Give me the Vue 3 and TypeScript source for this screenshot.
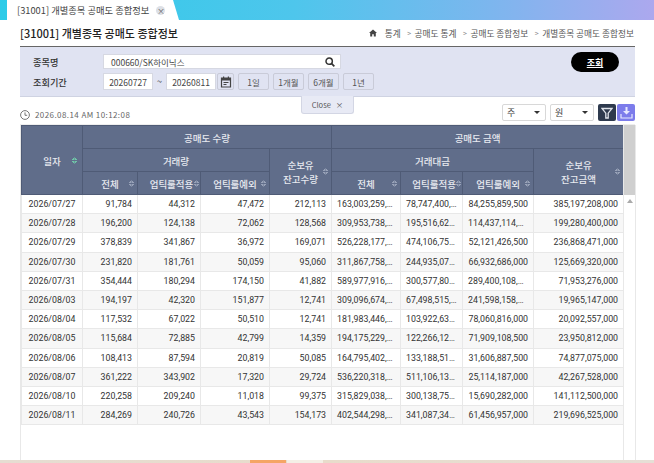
<script setup lang="ts">
interface Row {
  date: string
  qty: string[]
  amt: string[]
}

const rows: Row[] = [
  { date: '2026/07/27', qty: ['91,784', '44,312', '47,472', '212,113'], amt: ['163,003,259,000', '78,747,400,000', '84,255,859,500', '385,197,208,000'] },
  { date: '2026/07/28', qty: ['196,200', '124,138', '72,062', '128,568'], amt: ['309,953,738,000', '195,516,624,000', '114,437,114,000', '199,280,400,000'] },
  { date: '2026/07/29', qty: ['378,839', '341,867', '36,972', '169,071'], amt: ['526,228,177,000', '474,106,754,000', '52,121,426,500', '236,868,471,000'] },
  { date: '2026/07/30', qty: ['231,820', '181,761', '50,059', '95,060'], amt: ['311,867,758,000', '244,935,070,000', '66,932,686,000', '125,669,320,000'] },
  { date: '2026/07/31', qty: ['354,444', '180,294', '174,150', '41,882'], amt: ['589,977,916,000', '300,577,800,000', '289,400,108,000', '71,953,276,000'] },
  { date: '2026/08/03', qty: ['194,197', '42,320', '151,877', '12,741'], amt: ['309,096,674,000', '67,498,515,000', '241,598,158,000', '19,965,147,000'] },
  { date: '2026/08/04', qty: ['117,532', '67,022', '50,510', '12,741'], amt: ['181,983,446,000', '103,922,630,000', '78,060,816,000', '20,092,557,000'] },
  { date: '2026/08/05', qty: ['115,684', '72,885', '42,799', '14,359'], amt: ['194,175,229,000', '122,266,120,000', '71,909,108,500', '23,950,812,000'] },
  { date: '2026/08/06', qty: ['108,413', '87,594', '20,819', '50,085'], amt: ['164,795,402,000', '133,188,510,000', '31,606,887,500', '74,877,075,000'] },
  { date: '2026/08/07', qty: ['361,222', '343,902', '17,320', '29,724'], amt: ['536,220,318,000', '511,106,130,000', '25,114,187,000', '42,267,528,000'] },
  { date: '2026/08/10', qty: ['220,258', '209,240', '11,018', '99,375'], amt: ['315,829,038,000', '300,138,755,000', '15,690,282,000', '141,112,500,000'] },
  { date: '2026/08/11', qty: ['284,269', '240,726', '43,543', '154,173'], amt: ['402,544,298,000', '341,087,340,000', '61,456,957,000', '219,696,525,000'] },
]

const crumbs = ['통계', '공매도 통계', '공매도 종합정보', '개별종목 공매도 종합정보']
const periods = ['1일', '1개월', '6개월', '1년']
</script>

<template>
  <div class="page">
    <div class="tabbar">
      <div class="tab">
        <span>[31001] 개별종목 공매도 종합정보</span>
        <span class="tab-x">×</span>
      </div>
    </div>

    <div class="main">
      <div class="head">
        <h1>[31001] 개별종목 공매도 종합정보</h1>
        <div class="crumbs">
          <svg width="8" height="8" viewBox="0 0 10 10"><path d="M5 .5 0 5h1.500v4.500h2.500V6.500h2v3h2.500V5H10z" fill="#444" /></svg>
          <template v-for="(c, i) in crumbs" :key="c">
            <span v-if="i" class="sep">&gt;</span>
            <span>{{ c }}</span>
          </template>
        </div>
      </div>

      <div class="search">
        <div class="fields">
          <div class="field first">
            <label>종목명</label>
            <div class="input stock">
              <span>000660/SK하이닉스</span>
              <svg width="10" height="10" viewBox="0 0 12 12"><circle cx="5" cy="5" r="3.800" fill="none" stroke="#333" stroke-width="1.800" /><path d="m8 8 3.200 3.200" stroke="#333" stroke-width="2" /></svg>
            </div>
          </div>
          <div class="field">
            <label>조회기간</label>
            <div class="input date">20260727</div>
            <span class="tilde">~</span>
            <div class="input date">20260811</div>
            <button class="cal">
              <svg width="12" height="12" viewBox="0 0 12 12"><path d="M1.500 2h9v9h-9z" fill="none" stroke="#444" stroke-width="1.200" /><path d="M1.500 2h9v2.500h-9zM3 .5h1.200V2H3zM7.800 .5H9V2H7.800z" fill="#444" /><path d="M3.500 6h5v1h-5zM3.500 8h3v1h-3z" fill="#444" /></svg>
            </button>
            <button v-for="p in periods" :key="p" class="period">{{ p }}</button>
          </div>
        </div>
        <button class="go">조회</button>
      </div>

      <div class="info">
        <div class="stamp">
          <svg width="10" height="10" viewBox="0 0 10 10"><circle cx="5" cy="5" r="4.400" fill="none" stroke="#666" stroke-width=".9" /><path d="M5 2.400V5.300h2.200" fill="none" stroke="#666" stroke-width=".9" /></svg>
          <span>2026.08.14 AM 10:12:08</span>
        </div>
        <div class="close-tab">Close <span>×</span></div>
        <div class="tools">
          <div class="select"><span>주</span><i /></div>
          <div class="select"><span>원</span><i /></div>
          <button class="ico filter">
            <svg width="12" height="12" viewBox="0 0 12 12"><path d="M1 1.500h10L7.200 6.200V11H4.800V6.200z" fill="none" stroke="#dfe3ea" stroke-width="1.300" /></svg>
          </button>
          <button class="ico down">
            <svg width="13" height="13" viewBox="0 0 13 13"><path d="M5.500 1h2v4H10L6.500 8.500 3 5h2.500z" fill="#e6e8ff" /><path d="M1 8v4h11V8" fill="none" stroke="#e6e8ff" stroke-width="1.200" /></svg>
          </button>
        </div>
      </div>

      <div class="grid-wrap">
        <div class="grid-scroll">
          <table>
            <colgroup>
              <col class="c-date" />
              <col class="c1" />
              <col class="c2" />
              <col class="c3" />
              <col class="c4" />
              <col class="c5" />
              <col class="c6" />
              <col class="c7" />
              <col class="c8" />
            </colgroup>
            <thead>
              <tr>
                <th rowspan="3">일자<i class="sort on" /></th>
                <th colspan="4">공매도 수량</th>
                <th colspan="4">공매도 금액</th>
              </tr>
              <tr>
                <th colspan="3">거래량</th>
                <th rowspan="2">순보유<br />잔고수량<i class="sort" /></th>
                <th colspan="3">거래대금</th>
                <th rowspan="2">순보유<br />잔고금액<i class="sort" /></th>
              </tr>
              <tr>
                <th>전체<i class="sort" /></th>
                <th class="tight">업틱룰적용<i class="sort" /></th>
                <th>업틱룰예외<i class="sort" /></th>
                <th>전체<i class="sort" /></th>
                <th class="tight">업틱룰적용<i class="sort" /></th>
                <th>업틱룰예외<i class="sort" /></th>
              </tr>
            </thead>
            <tbody>
              <tr v-for="r in rows" :key="r.date">
                <td class="d">{{ r.date }}</td>
                <td v-for="(q, i) in r.qty" :key="i">{{ q }}</td>
                <td v-for="(a, i) in r.amt" :key="'a' + i">{{ a }}</td>
              </tr>
            </tbody>
          </table>
        </div>
        <div class="scrollbar">
          <div class="sb-top" />
          <div class="sb-arrow" />
        </div>
      </div>
    </div>

    <div class="taskbar"><span class="orange" /><span class="pale" /></div>
  </div>
</template>

<style>
html, body {
  margin: 0;
  background: #fff;
  overflow: hidden;
}
</style>

<style scoped>
.page {
  width: 654px;
  height: 463px;
  display: flex;
  flex-direction: column;
  overflow: hidden;
  font-family: "Noto Sans CJK KR", "Noto Sans", sans-serif;
  color: #333;
}

.tabbar {
  height: 20px;
  flex: none;
  padding-left: 7px;
  background: linear-gradient(90deg, #2ccbe8 0%, #4ec6ec 45%, #7cb6ee 75%, #aca8ee 100%);
}

.tab {
  width: 179px;
  height: 20px;
  box-sizing: border-box;
  padding: 0 0 0 10px;
  display: flex;
  align-items: center;
  gap: 7px;
  font-size: 9.300px;
  color: #444;
  background: #fff;
  clip-path: polygon(0 0, 166px 0, 172px 100%, 0 100%);
}

.tab-x {
  width: 9px;
  height: 9px;
  border-radius: 50%;
  background: #dde0e6;
  color: #666;
  font-size: 8px;
  line-height: 9px;
  text-align: center;
}

.main {
  flex: 1;
  min-height: 0;
  display: flex;
  flex-direction: column;
  padding: 0 19px 0 20px;
}

.head {
  height: 26px;
  flex: none;
  display: flex;
  align-items: center;
  justify-content: space-between;
}

h1 {
  margin: 0;
  font-size: 11px;
  font-weight: 500;
  color: #222;
}

.crumbs {
  display: flex;
  align-items: center;
  gap: 3.500px;
  padding-right: 1px;
  font-size: 8.700px;
  color: #555;
}

.crumbs svg {
  margin-right: 4px;
}

.sep {
  color: #888;
  font-size: 7px;
  margin-left: 3px;
}

.search {
  height: 51px;
  flex: none;
  box-sizing: border-box;
  border-top: 1px solid #666;
  border-bottom: 1px solid #cfd3e2;
  background: #e0e3f2;
  display: flex;
  justify-content: space-between;
  padding: 5px 16px 0 13px;
}

.fields {
  display: flex;
  flex-direction: column;
  gap: 4px;
  padding-top: 2px;
}

.field {
  display: flex;
  align-items: center;
  height: 17px;
}

.field.first {
  height: 15px;
}

.field label {
  width: 70px;
  font-size: 9.200px;
  font-weight: 500;
  color: #333;
}

.input {
  height: 100%;
  box-sizing: border-box;
  background: #fff;
  border: 1px solid #d6d8e2;
  font-size: 8.500px;
  color: #444;
  display: flex;
  align-items: center;
}

.stock {
  width: 238px;
  padding: 0 5px 0 7px;
  justify-content: space-between;
}

.date {
  width: 50px;
  justify-content: center;
}

.tilde {
  width: 13px;
  text-align: center;
  font-size: 9px;
}

button {
  padding: 0;
  font-family: inherit;
  cursor: pointer;
}

.cal {
  width: 17px;
  height: 17px;
  margin: 0 4px 0 1px;
  background: #e0e3f2;
  border: 1px solid #c9cbd8;
  border-radius: 2px;
  display: flex;
  align-items: center;
  justify-content: center;
}

.period {
  height: 17px;
  width: 31px;
  margin-right: 4px;
  background: #e0e3f2;
  border: 1px solid #c9cbd8;
  border-radius: 2px;
  font-size: 8.500px;
  color: #555;
}

.go {
  width: 48px;
  height: 20px;
  margin-top: 0;
  border: 0;
  border-radius: 10px;
  background: #000;
  color: #fff;
  font-size: 9px;
  font-weight: 700;
  text-decoration: underline;
}

.info {
  position: relative;
  height: 27px;
  flex: none;
  display: flex;
  justify-content: space-between;
  align-items: center;
}

.stamp {
  display: flex;
  align-items: center;
  gap: 5px;
  font-size: 8px;
  color: #666;
  letter-spacing: .42px;
  padding-top: 8px;
}

.close-tab {
  position: absolute;
  left: 281px;
  top: -1px;
  width: 53px;
  height: 18px;
  box-sizing: border-box;
  background: #e8eaf5;
  border: 1px solid #d3d6e4;
  border-top: 0;
  border-radius: 0 0 3px 3px;
  font-size: 7.500px;
  color: #555;
  display: flex;
  align-items: center;
  justify-content: center;
  gap: 5px;
}

.tools {
  display: flex;
  align-items: center;
  gap: 1px;
  padding-top: 4px;
}

.select {
  width: 44px;
  height: 17px;
  box-sizing: border-box;
  margin-right: 3px;
  border: 1px solid #d8d8d8;
  border-radius: 2px;
  display: flex;
  align-items: center;
  justify-content: space-between;
  padding: 0 5px 0 4px;
  font-size: 9px;
  color: #444;
}

.select i {
  border-top: 3.500px solid #333;
  border-left: 3px solid transparent;
  border-right: 3px solid transparent;
}

.ico {
  width: 18px;
  height: 17px;
  border: 0;
  border-radius: 2px;
  display: flex;
  align-items: center;
  justify-content: center;
}

.filter {
  background: #2e3a4e;
}

.down {
  background: #7c7ceb;
}

.grid-wrap {
  flex: 1;
  min-height: 0;
  display: flex;
  border-left: 1px solid #e8e8e8;
  border-top: 1px solid #eee;
}

.grid-scroll {
  width: 602px;
  flex: none;
  overflow: hidden;
}

table {
  width: 602px;
  table-layout: fixed;
  border-collapse: collapse;
}

.c-date { width: 61px; }
.c1 { width: 55px; }
.c2 { width: 63px; }
.c3 { width: 69px; }
.c4 { width: 62px; }
.c5 { width: 69px; }
.c6 { width: 62px; }
.c7 { width: 71px; }
.c8 { width: 90px; }

th {
  position: relative;
  height: 23px;
  box-sizing: border-box;
  padding: 1px 0 0;
  background: #606d8a;
  border: 1px solid #4f5b76;
  color: #e8eaf0;
  font-size: 9.500px;
  font-weight: 500;
  line-height: 14px;
  text-align: center;
  white-space: nowrap;
}

th.tight {
  padding-left: 5px;
}

.sort {
  position: absolute;
  right: 3px;
  top: 50%;
  margin-top: -3.500px;
  width: 5px;
  height: 7px;
  background:
    linear-gradient(to bottom right, transparent 50%, #98a2b8 50%) 0 0 / 2.500px 3px no-repeat,
    linear-gradient(to bottom left, transparent 50%, #98a2b8 50%) 2.500px 0 / 2.500px 3px no-repeat,
    linear-gradient(to top right, transparent 50%, #98a2b8 50%) 0 4px / 2.500px 3px no-repeat,
    linear-gradient(to top left, transparent 50%, #98a2b8 50%) 2.500px 4px / 2.500px 3px no-repeat;
}

th.tight .sort {
  right: 1px;
}

.sort.on {
  right: 5px;
  background:
    linear-gradient(to bottom right, transparent 50%, #6fc7a8 50%) 0 0 / 2.500px 3px no-repeat,
    linear-gradient(to bottom left, transparent 50%, #6fc7a8 50%) 2.500px 0 / 2.500px 3px no-repeat,
    linear-gradient(to top right, transparent 50%, #6fc7a8 50%) 0 4px / 2.500px 3px no-repeat,
    linear-gradient(to top left, transparent 50%, #6fc7a8 50%) 2.500px 4px / 2.500px 3px no-repeat;
}

td {
  height: 19.200px;
  box-sizing: border-box;
  padding: 0 5px;
  border: 1px solid #e8e8e8;
  font-size: 8.800px;
  color: #333;
  text-align: right;
  white-space: nowrap;
  overflow: hidden;
  text-overflow: ellipsis;
  font-family: Roboto, "Noto Sans", sans-serif;
}

td.d {
  text-align: center;
  padding: 0;
}

tbody tr:nth-child(even) td {
  background: #f7f7f7;
}

.scrollbar {
  width: 11px;
  flex: none;
  border-left: 1px solid #e8e8e8;
  border-right: 1px solid #e8e8e8;
}

.sb-top {
  height: 70px;
  background: #cfcfcf;
}

.sb-arrow {
  margin: 4px auto 0;
  width: 0;
  border-bottom: 4px solid #aaa;
  border-left: 3px solid transparent;
  border-right: 3px solid transparent;
}

.taskbar {
  height: 3px;
  flex: none;
  position: relative;
  background: linear-gradient(90deg, #e6ddd2, #e8dccb 50%, #e6dfd6);
}

.orange {
  position: absolute;
  left: 250px;
  width: 36px;
  height: 3px;
  background: #f5a565;
}

.pale {
  position: absolute;
  left: 287px;
  width: 36px;
  height: 3px;
  background: #f4efe6;
}
</style>
